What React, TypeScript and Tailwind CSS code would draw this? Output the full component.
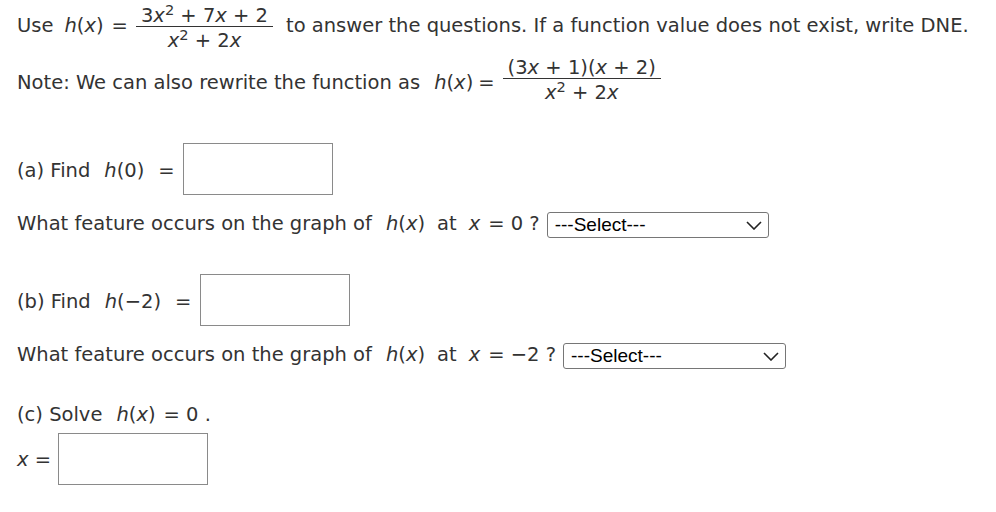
import React from 'react';

const font = { fontFamily: '"DejaVu Sans", Verdana, sans-serif' };

function Frac({ num, den, className }: { num: React.ReactNode; den: React.ReactNode; className: string }) {
    return (
        <span className={`flex flex-col items-center leading-[20px] ${className}`}>
            <span className="px-[5px] border-b border-[#333] whitespace-nowrap">{num}</span>
            <span className="px-[5px] pt-[4px] whitespace-nowrap">{den}</span>
        </span>
    );
}

const I = ({ children }: { children: React.ReactNode }) => <i>{children}</i>;

function Hx({ arg, gap = 'ml-[14px]' }: { arg: React.ReactNode; gap?: string }) {
    return (
        <span className={gap}>
            <I>h</I>({arg})
        </span>
    );
}

function AnswerBox() {
    return <div className="w-[150px] h-[52px] border border-[#8a8a8a] bg-white shrink-0" />;
}

function SelectBox({ width }: { width: string }) {
    return (
        <div
            className={`${width} h-[26px] border border-[#767676] rounded-[3px] flex items-center justify-between pl-[7px] pr-[6px] pb-[2px] text-[19px] leading-none text-black shrink-0`}
            style={{ fontFamily: '"Liberation Sans", Arial, sans-serif' }}
        >
            <span>---Select---</span>
            <svg width="16" height="9" viewBox="0 0 16 9" fill="none" className="mt-[2px]">
                <path d="M1 1l7 7 7-7" stroke="#222" strokeWidth="1.6" />
            </svg>
        </div>
    );
}

export default function App() {
    return (
        <div className="bg-white w-[996px] h-[512px] text-[#333] text-[19.5px] leading-[20px] pl-[17px] whitespace-nowrap" style={font}>
            {/* intro */}
            <div className="flex items-start h-[56px]">
                <span className="mt-[16px]">
                    Use<Hx arg={<I>x</I>} gap="ml-[11px]" /><span className="ml-[8px]">=</span>
                </span>
                <Frac
                    className="mt-[6px] ml-[8px]"
                    num={<>3<I>x</I><sup>2</sup> + 7<I>x</I> + 2</>}
                    den={<><I>x</I><sup>2</sup> + 2<I>x</I></>}
                />
                <span className="mt-[16px] ml-[13px]">to answer the questions. If a function value does not exist, write DNE.</span>
            </div>

            <div className="flex items-start h-[52px]">
                <span className="mt-[17px]">
                    Note: We can also rewrite the function as<Hx arg={<I>x</I>} /><span className="ml-[5px]">=</span>
                </span>
                <Frac
                    className="mt-[2px] ml-[8px]"
                    num={<>(3<I>x</I> + 1)(<I>x</I> + 2)</>}
                    den={<><I>x</I><sup>2</sup> + 2<I>x</I></>}
                />
            </div>

            {/* part a */}
            <div className="flex items-start mt-[35px] h-[52px]">
                <span className="mt-[18px]">
                    (a) Find<Hx arg="0" /><span className="ml-[14px]">=</span>
                </span>
                <span className="ml-[8px]"><AnswerBox /></span>
            </div>
            <div className="flex items-start mt-[17px] h-[26px]">
                <span className="mt-[2px]">
                    What feature occurs on the graph of<Hx arg={<I>x</I>} />
                    <span className="ml-[12px]">at</span>
                    <I><span className="ml-[12px]">x</span></I>
                    <span className="ml-[8px]">= 0 ?</span>
                </span>
                <span className="ml-[7px]"><SelectBox width="w-[222px]" /></span>
            </div>

            {/* part b */}
            <div className="flex items-start mt-[36px] h-[52px]">
                <span className="mt-[18px]">
                    (b) Find<Hx arg="−2" /><span className="ml-[14px]">=</span>
                </span>
                <span className="ml-[9px]"><AnswerBox /></span>
            </div>
            <div className="flex items-start mt-[17px] h-[26px]">
                <span className="mt-[2px]">
                    What feature occurs on the graph of<Hx arg={<I>x</I>} />
                    <span className="ml-[12px]">at</span>
                    <I><span className="ml-[12px]">x</span></I>
                    <span className="ml-[8px]">= −2 ?</span>
                </span>
                <span className="ml-[7px]"><SelectBox width="w-[223px]" /></span>
            </div>

            {/* part c */}
            <div className="flex items-start mt-[36px] h-[20px]">
                <span>
                    (c) Solve<Hx arg={<I>x</I>} /><span className="ml-[8px]">= 0 .</span>
                </span>
            </div>
            <div className="flex items-start mt-[8px] h-[52px]">
                <span className="mt-[17px]">
                    <I>x</I> =
                </span>
                <span className="ml-[7px]"><AnswerBox /></span>
            </div>
        </div>
    );
}
